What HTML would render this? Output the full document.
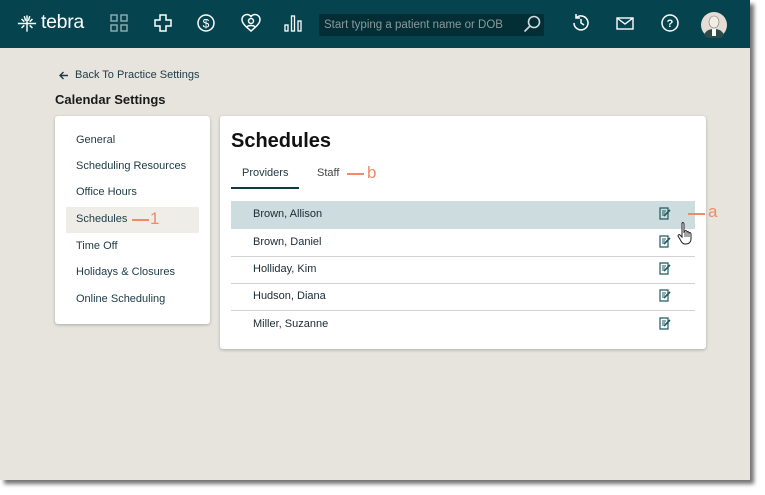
<!DOCTYPE html>
<html><head><meta charset="utf-8"><style>
*{margin:0;padding:0;box-sizing:border-box}
body{width:765px;height:495px;background:#fff;font-family:"Liberation Sans",sans-serif;position:relative;overflow:hidden}
#app{position:absolute;left:0;top:0;width:750px;height:480px;background:#e7e4de;box-shadow:4px 4px 4px rgba(0,0,0,.55)}
#hdr{position:absolute;left:0;top:0;width:750px;height:48px;background:#05444f}
.ic{position:absolute;top:13px}
#search{position:absolute;left:319px;top:14px;width:225px;height:22px;background:#032e36;border-radius:2px;color:#8a9a9c;font-size:11.5px;line-height:22px;padding-left:5px}
.abs{position:absolute}
.panel{position:absolute;background:#fff;border-radius:3px;box-shadow:0 1px 3px rgba(0,0,0,.25)}
.nav{position:absolute;left:21px;font-size:11px;color:#1d3a44;line-height:14px}
.row{position:absolute;left:11px;width:464px;height:28px;border-bottom:1px solid #d2d2d2;font-size:11px;color:#1a2a33;line-height:27px;padding-left:22px}
.ann{position:absolute;color:#f08a6a;font-size:17px;line-height:18px}
.dash{position:absolute;height:2px;background:#f08a6a}
</style></head><body>
<div id="app">
<div id="hdr">
<svg class="abs" style="left:17px;top:14px" width="20" height="19" viewBox="0 0 22 20" fill="none" stroke="#fff" stroke-width="1.6"><path d="M11 1v18M1 10h20M5 5l3 3M17 5l-3 3M8 2l1.5 5M14 2l-1.5 5M5 15l3-3M17 15l-3-3"/></svg>
<div class="abs" style="left:41px;top:11px;color:#fff;font-size:19.5px;letter-spacing:-.3px">tebra</div>
<svg class="ic" style="left:110px" width="18" height="20" viewBox="0 0 18 20" fill="none" stroke="#8fb0b4" stroke-width="1.4"><rect x="1" y="2" width="6" height="6"/><rect x="11" y="2" width="6" height="6"/><rect x="1" y="12" width="6" height="6"/><rect x="11" y="12" width="6" height="6"/></svg>
<svg class="ic" style="left:153px" width="20" height="20" viewBox="0 0 20 20" fill="none" stroke="#fff" stroke-width="1.5"><path d="M7 2h6v5h5v6h-5v5H7v-5H2V7h5z"/></svg>
<svg class="ic" style="left:196px" width="20" height="20" viewBox="0 0 20 20" fill="none" stroke="#fff" stroke-width="1.5"><circle cx="10" cy="10" r="8"/><text x="10" y="14.5" font-size="12" fill="#fff" stroke="none" text-anchor="middle" font-family="Liberation Sans">$</text></svg>
<svg class="ic" style="left:241px" width="20" height="20" viewBox="0 0 20 20" fill="none" stroke="#fff" stroke-width="1.5"><path d="M10 18C4 13 1 10 1 6.5 1 3.5 3.5 1.5 6 1.5c2 0 3.2 1 4 2 .8-1 2-2 4-2 2.5 0 5 2 5 5C19 10 16 13 10 18z"/><circle cx="10" cy="8" r="2.5"/><path d="M6 14c1-2 7-2 8 0"/></svg>
<svg class="ic" style="left:284px" width="18" height="20" viewBox="0 0 18 20" fill="none" stroke="#fff" stroke-width="1.3"><rect x="1" y="12" width="3" height="6"/><rect x="7.5" y="3" width="3" height="15"/><rect x="14" y="8" width="3" height="10"/></svg>
<div id="search">Start typing a patient name or DOB</div>
<svg class="abs" style="left:523px;top:15px" width="18" height="18" viewBox="0 0 18 18" fill="none" stroke="#cfdcdd" stroke-width="1.6"><circle cx="11" cy="7" r="5.5"/><path d="M7 11l-5.5 5.5"/></svg>
<svg class="ic" style="left:571px" width="20" height="20" viewBox="0 0 20 20" fill="none" stroke="#fff" stroke-width="1.5"><path d="M3 10a7 7 0 1 0 2-5"/><path d="M5 1v4h4"/><path d="M10 6v4l3 2"/></svg>
<svg class="ic" style="left:616px" width="18" height="20" viewBox="0 0 18 20" fill="none" stroke="#fff" stroke-width="1.4"><rect x="1" y="5" width="16" height="11"/><path d="M1 5l8 6 8-6"/></svg>
<svg class="ic" style="left:660px" width="20" height="20" viewBox="0 0 20 20" fill="none" stroke="#fff" stroke-width="1.5"><circle cx="10" cy="10" r="8"/><text x="10" y="14" font-size="11" font-weight="bold" fill="#fff" stroke="none" text-anchor="middle" font-family="Liberation Sans">?</text></svg>
<svg class="abs" style="left:701px;top:12px" width="26" height="26" viewBox="0 0 26 26"><circle cx="13" cy="13" r="13" fill="#e5ddd5"/><path d="M3 23c2-5 6-6 10-6s8 1 10 6a13 13 0 0 1-20 0z" fill="#2f4a4a"/><rect x="11" y="17" width="4" height="7" fill="#fff"/><ellipse cx="13" cy="10" rx="5" ry="6" fill="#f3ede6" stroke="#7a7a7a" stroke-width=".6"/></svg>
</div>
<svg class="abs" style="left:59px;top:71px" width="10" height="9" viewBox="0 0 10 9" fill="none" stroke="#1d3a44" stroke-width="1.4"><path d="M9 4.5H1.5M4.5 1L1 4.5 4.5 8"/></svg>
<div class="abs" style="left:75px;top:69px;font-size:11px;color:#1d3a44">Back To Practice Settings</div>
<div class="abs" style="left:55px;top:92px;font-size:13px;font-weight:bold;color:#1a1a1a">Calendar Settings</div>
<div class="panel" style="left:55px;top:116px;width:155px;height:208px">
<div class="nav" style="top:17px">General</div>
<div class="nav" style="top:43px">Scheduling Resources</div>
<div class="nav" style="top:69px">Office Hours</div>
<div class="abs" style="left:11px;top:91px;width:133px;height:26px;background:#efede8"></div>
<div class="nav" style="top:96px">Schedules</div>
<div class="dash" style="left:77px;top:103px;width:17px"></div>
<div class="ann" style="left:95px;top:94px">1</div>
<div class="nav" style="top:123px">Time Off</div>
<div class="nav" style="top:149px">Holidays &amp; Closures</div>
<div class="nav" style="top:176px">Online Scheduling</div>
</div>
<div class="panel" style="left:220px;top:116px;width:486px;height:233px">
<div class="abs" style="left:11px;top:14px;font-size:20px;font-weight:bold;color:#111">Schedules</div>
<div class="abs" style="left:22px;top:51px;font-size:11px;color:#1d3a44">Providers</div>
<div class="abs" style="left:11px;top:71px;width:68px;height:2px;background:#0f3a44"></div>
<div class="abs" style="left:97px;top:51px;font-size:11px;color:#444">Staff</div>
<div class="dash" style="left:127px;top:57px;width:17px"></div>
<div class="ann" style="left:147px;top:48px">b</div>
<div class="row" style="top:85px;background:#cddcdf;border-bottom:none">Brown, Allison</div>
<div class="row" style="top:113px">Brown, Daniel</div>
<div class="row" style="top:140px">Holliday, Kim</div>
<div class="row" style="top:167px">Hudson, Diana</div>
<div class="row" style="top:195px;border-bottom:none">Miller, Suzanne</div>
</div>
<svg width="0" height="0"><defs><g id="e"><path d="M1 1h8v11H1z" fill="none" stroke="#1f5a60" stroke-width="1.2"/><path d="M3 4h4M3 6h3M3 8h2" stroke="#1f5a60"/><path d="M5 9l6-6" stroke="#1f5a60" stroke-width="1.6"/></g></defs></svg>
<svg class="abs" style="left:659px;top:207px" width="13" height="14"><use href="#e"/></svg>
<svg class="abs" style="left:659px;top:235px" width="13" height="14"><use href="#e"/></svg>
<svg class="abs" style="left:659px;top:262px" width="13" height="14"><use href="#e"/></svg>
<svg class="abs" style="left:659px;top:289px" width="13" height="14"><use href="#e"/></svg>
<svg class="abs" style="left:659px;top:317px" width="13" height="14"><use href="#e"/></svg>
<div class="dash" style="left:688px;top:213px;width:17px"></div>
<div class="ann" style="left:708px;top:203px">a</div>
<svg class="abs" style="left:677px;top:221px" width="18" height="24" viewBox="0 0 18 24"><path d="M5 2c1-1 2 0 2 1v8l1-1c1-1 2 0 2 1 1-1 2 0 2 1 1-1 2 0 2 1v5c0 3-2 5-5 5H8c-2 0-3-1-4-3l-3-5c0-1 1-2 2-1l2 2V3z" fill="#fff" stroke="#222" stroke-width="1"/><path d="M8 11v5M10 11v5M12 12v4" stroke="#222" stroke-width=".8"/></svg>
</div>
</body></html>
